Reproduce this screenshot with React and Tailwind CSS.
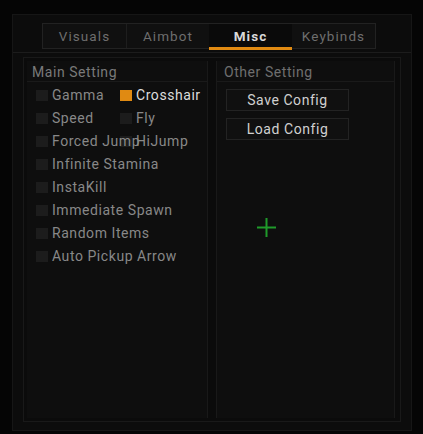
import { useState } from 'react';

const tabs = ['Visuals', 'Aimbot', 'Misc', 'Keybinds'];

const mainOptions = [
  [{ label: 'Gamma' }, { label: 'Crosshair', on: true }],
  [{ label: 'Speed' }, { label: 'Fly' }],
  [{ label: 'Forced Jump' }, { label: 'HiJump' }],
  [{ label: 'Infinite Stamina' }],
  [{ label: 'InstaKill' }],
  [{ label: 'Immediate Spawn' }],
  [{ label: 'Random Items' }],
  [{ label: 'Auto Pickup Arrow' }],
];

function Check({ label, on }) {
  return (
    <div className="flex items-center gap-[4px] whitespace-nowrap">
      <span className={`w-[12px] h-[11px] shrink-0 ${on ? 'bg-[#e08a12]' : 'bg-[#1c1c1c]'}`} />
      <span className={`relative z-10 ${on ? 'text-[#dcdcdc]' : 'text-[#888]'}`}>{label}</span>
    </div>
  );
}

export default function App() {
  const [active, setActive] = useState('Misc');

  return (
    <div
      className="w-[423px] h-[434px] bg-[#050505] pt-[14px] pl-[12px] overflow-hidden"
      style={{ fontFamily: 'Roboto, "Liberation Sans", sans-serif' }}
    >
      {/* window */}
      <div className="w-[400px] h-[417px] bg-[#0c0c0c] border border-[#161616] flex flex-col">
        {/* tab bar */}
        <div className="flex justify-center pr-[6px] pt-[8px] pb-[3px] border-b border-[#1c1c1c]">
          <div className="flex h-[26px] border border-[#222] bg-[#101010] text-[13.5px] tracking-[0.08em]">
            {tabs.map((t, i) => (
              <button
                key={t}
                onClick={() => setActive(t)}
                className={`relative flex items-center justify-center h-full w-[83px] ${
                  active === t
                    ? 'bg-[#0a0a0a] text-[#d8d8d8] font-bold'
                    : 'text-[#6e6e6e]'
                } ${i > 0 && active !== t && active !== tabs[i - 1] ? 'border-l border-[#1e1e1e]' : ''}`}
              >
                {t}
                {active === t && (
                  <span className="absolute left-0 right-0 -bottom-[2px] h-[3px] bg-[#e08a12]" />
                )}
              </button>
            ))}
          </div>
        </div>

        {/* content */}
        <div className="flex-1 mx-[10px] mt-[4px] mb-[8px] bg-[#0b0b0b] border border-[#191919] flex gap-[8px] p-[3px] text-[14px] tracking-[0.04em]">
          {/* left panel */}
          <div className="w-[181px] bg-[#0e0e0e] border-r border-[#191919] flex flex-col">
            <div className="h-[21px] pl-[5px] pt-[1px] text-[#7a7a7a] border-b border-[#1a1a1a]">
              Main Setting
            </div>
            <div className="flex flex-col gap-[7px] pl-[9px] pt-[5px] leading-[16px]">
              {mainOptions.map((row, i) => (
                <div key={i} className="flex">
                  <div className="w-[84px] relative z-10">
                    <Check {...row[0]} />
                  </div>
                  {row[1] && <Check {...row[1]} />}
                </div>
              ))}
            </div>
          </div>

          {/* right panel */}
          <div className="flex-1 bg-[#0e0e0e] border-l border-r border-[#191919] flex flex-col mr-[2px]">
            <div className="h-[21px] pl-[7px] pt-[1px] text-[#6f6f6f] border-b border-[#1a1a1a]">
              Other Setting
            </div>
            <div className="flex flex-col gap-[7px] pl-[9px] pt-[7px]">
              {['Save Config', 'Load Config'].map((b) => (
                <button
                  key={b}
                  className="w-[123px] h-[22px] bg-[#101010] border border-[#232323] text-[#d0d0d0]"
                >
                  {b}
                </button>
              ))}
            </div>
            <div className="flex-1 flex items-start pl-[39px] pt-[77px]">
              <svg width="21" height="21" viewBox="0 0 21 21">
                <path d="M10.5 1v19M1 10.5h19" stroke="#1f9a2a" strokeWidth="2" />
              </svg>
            </div>
          </div>
        </div>
      </div>
    </div>
  );
}
